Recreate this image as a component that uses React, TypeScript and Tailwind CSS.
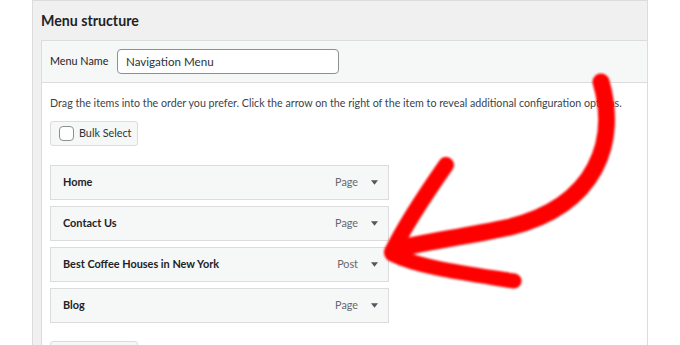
import React from "react";

const items = [
  { title: "Home", type: "Page" },
  { title: "Contact Us", type: "Page" },
  { title: "Best Coffee Houses in New York", type: "Post" },
  { title: "Blog", type: "Page" },
];

function MenuItem({ title, type }: { title: string; type: string }) {
  return (
    <div className="flex h-[35px] w-[339px] items-center border border-[#dcdcde] bg-[#f6f7f7] pl-[12px] pr-[10px]">
      <span className="text-[10.9px] font-bold text-[#1d2327]">{title}</span>
      <span className="ml-auto text-[10.8px] text-[#646970]">{type}</span>
      <svg width="7" height="5" viewBox="0 0 7 5" className="ml-[13px]">
        <path d="M0 0.3 L7 0.3 L3.5 4.7 Z" fill="#50575e" />
      </svg>
    </div>
  );
}

export default function App() {
  return (
    <div className="relative h-[345px] w-[680px] overflow-hidden bg-white" style={{ fontFamily: "Lato, sans-serif" }}>
      <div className="ml-[32px] h-[345px] w-[616px] border-x border-t border-[#dcdcde] bg-[#f0f0f1] pl-[8px]">
        <div className="flex h-[39px] items-center">
          <h2 className="text-[14.2px] font-bold text-[#1d2327]">Menu structure</h2>
        </div>
        <div className="h-[320px] border-l border-t border-[#dcdcde] bg-white">
          <div className="flex h-[42px] items-center border-b border-[#dcdcde] bg-[#f6f7f7] pl-[8px]">
            <span className="w-[67px] text-[10.8px] text-[#1d2327]">Menu Name</span>
            <div className="flex h-[25px] w-[222px] items-center rounded-[4px] border border-[#8c8f94] bg-white px-[8px] text-[11.6px] text-[#2c3338]">
              Navigation Menu
            </div>
          </div>
          <div className="pl-[8px] pt-[10px]">
            <p className="whitespace-nowrap text-[10.7px] leading-[20px] text-[#3c434a]">
              Drag the items into the order you prefer. Click the arrow on the right of the item to reveal additional configuration options.
            </p>
            <div className="mt-[8px] flex h-[25px] w-[88px] items-center gap-[5px] rounded-[3px] border border-[#dcdcde] bg-[#f6f7f7] pl-[8px]">
              <span className="h-[15px] w-[15px] rounded-[4px] border border-[#8c8f94] bg-white" />
              <span className="text-[10.8px] text-[#2c3338]">Bulk Select</span>
            </div>
            <div className="mt-[19px] flex flex-col gap-[6px]">
              {items.map((it) => (
                <MenuItem key={it.title} title={it.title} type={it.type} />
              ))}
            </div>
            <div className="mt-[18px] h-[25px] w-[88px] rounded-[3px] border border-[#dcdcde] bg-[#f6f7f7]" />
          </div>
        </div>
      </div>

      {/* red annotation arrow */}
      <svg className="pointer-events-none absolute left-0 top-0" width="680" height="345" viewBox="0 0 680 345">
        <defs>
          <filter id="soft" x="-5%" y="-5%" width="110%" height="110%">
            <feGaussianBlur stdDeviation="0.8" />
          </filter>
        </defs>
        <g fill="none" stroke="#ff0000" strokeLinecap="round" strokeLinejoin="round" filter="url(#soft)">
          <path d="M601 82 C618 140 598 205 510 227 C460 238 420 242 394 250" strokeWidth="17" />
          <path d="M446 165 C425 195 405 225 392 252" strokeWidth="16" />
          <path d="M392 254 C420 268 470 274 514 281" strokeWidth="15" />
        </g>
      </svg>
    </div>
  );
}
